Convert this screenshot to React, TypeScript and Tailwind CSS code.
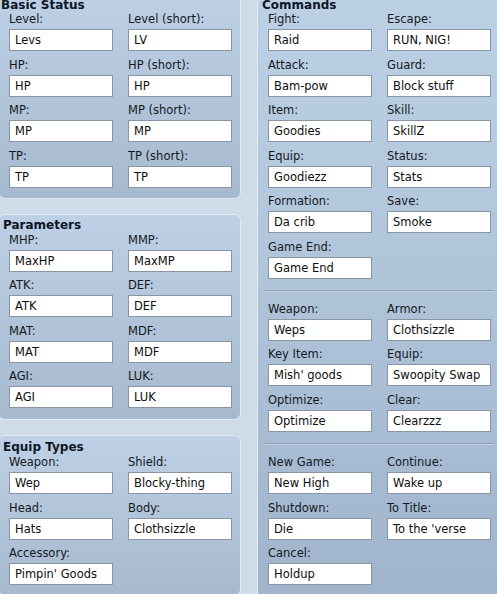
const Field = ({ label, value }: { label: string; value: string }) => (
  <div className="flex flex-col">
    <span className="h-[13px] leading-[13px] whitespace-nowrap text-[#15191e]">{label}</span>
    <div className="mt-[3px] h-[22px] border border-[#8795a4] bg-white px-[5px] leading-[20px] whitespace-nowrap text-[#0e0e0e]">
      {value}
    </div>
  </div>
);

const Grid = ({ items, className = "" }: { items: [string, string][]; className?: string }) => (
  <div className={`grid grid-cols-[104px_104px] gap-x-[15px] gap-y-[7.5px] pl-[10px] ${className}`}>
    {items.map(([l, v]) => (
      <Field key={l + v} label={l} value={v} />
    ))}
  </div>
);

const Header = ({ children, className = "" }: { children: string; className?: string }) => (
  <h2 className={`h-[14px] leading-[14px] text-[12px] font-bold text-[#0d1626] ${className}`}>{children}</h2>
);

const Separator = () => (
  <div className="ml-[7px] mr-[12px] h-[2px] border-t border-[#8c9fb4] border-b border-b-[#c3d2e1]" />
);

const panel = "rounded-[7px] border border-[#e2eaf3] bg-gradient-to-b from-[#bdd0e5] to-[#a6b9ce]";

export default function App() {
  return (
    <div className="w-[497px] h-[594px] overflow-hidden flex bg-[#cfdbe8] font-['Verdana','DejaVu_Sans',sans-serif] text-[11.5px]">
      <div className="flex flex-col gap-[15px] w-[243px] ml-[-2px] shrink-0">
        <section className={`mt-[-5px] pt-[2px] pb-[10px] ${panel}`}>
          <Header className="pl-[2px]">Basic Status</Header>
          <Grid
            className="pt-[1px]"
            items={[
              ["Level:", "Levs"],
              ["Level (short):", "LV"],
              ["HP:", "HP"],
              ["HP (short):", "HP"],
              ["MP:", "MP"],
              ["MP (short):", "MP"],
              ["TP:", "TP"],
              ["TP (short):", "TP"],
            ]}
          />
        </section>
        <section className={`pt-[3px] pb-[11px] ${panel}`}>
          <Header className="pl-[4px]">Parameters</Header>
          <Grid
            className="pt-[2px]"
            items={[
              ["MHP:", "MaxHP"],
              ["MMP:", "MaxMP"],
              ["ATK:", "ATK"],
              ["DEF:", "DEF"],
              ["MAT:", "MAT"],
              ["MDF:", "MDF"],
              ["AGI:", "AGI"],
              ["LUK:", "LUK"],
            ]}
          />
        </section>
        <section className={`pt-[4px] pb-[10px] ${panel}`}>
          <Header className="pl-[4px]">Equip Types</Header>
          <Grid
            className="pt-[2px]"
            items={[
              ["Weapon:", "Wep"],
              ["Shield:", "Blocky-thing"],
              ["Head:", "Hats"],
              ["Body:", "Clothsizzle"],
              ["Accessory:", "Pimpin' Goods"],
            ]}
          />
        </section>
      </div>

      <section className="ml-[16px] mt-[-5px] w-[250px] shrink-0 h-[620px] pt-[2px] rounded-[7px] border border-[#e2eaf3] bg-gradient-to-b from-[#bdd1e6] to-[#9fb4cb]">
        <Header className="pl-[4px]">Commands</Header>
        <Grid
          className="pt-[1px]"
          items={[
            ["Fight:", "Raid"],
            ["Escape:", "RUN, NIG!"],
            ["Attack:", "Bam-pow"],
            ["Guard:", "Block stuff"],
            ["Item:", "Goodies"],
            ["Skill:", "SkillZ"],
            ["Equip:", "Goodiezz"],
            ["Status:", "Stats"],
            ["Formation:", "Da crib"],
            ["Save:", "Smoke"],
            ["Game End:", "Game End"],
          ]}
        />
        <div className="mt-[11px] mb-[11px]">
          <Separator />
        </div>
        <Grid
          items={[
            ["Weapon:", "Weps"],
            ["Armor:", "Clothsizzle"],
            ["Key Item:", "Mish' goods"],
            ["Equip:", "Swoopity Swap"],
            ["Optimize:", "Optimize"],
            ["Clear:", "Clearzzz"],
          ]}
        />
        <div className="mt-[11.5px] mb-[11px]">
          <Separator />
        </div>
        <Grid
          items={[
            ["New Game:", "New High"],
            ["Continue:", "Wake up"],
            ["Shutdown:", "Die"],
            ["To Title:", "To the 'verse"],
            ["Cancel:", "Holdup"],
          ]}
        />
      </section>
    </div>
  );
}
